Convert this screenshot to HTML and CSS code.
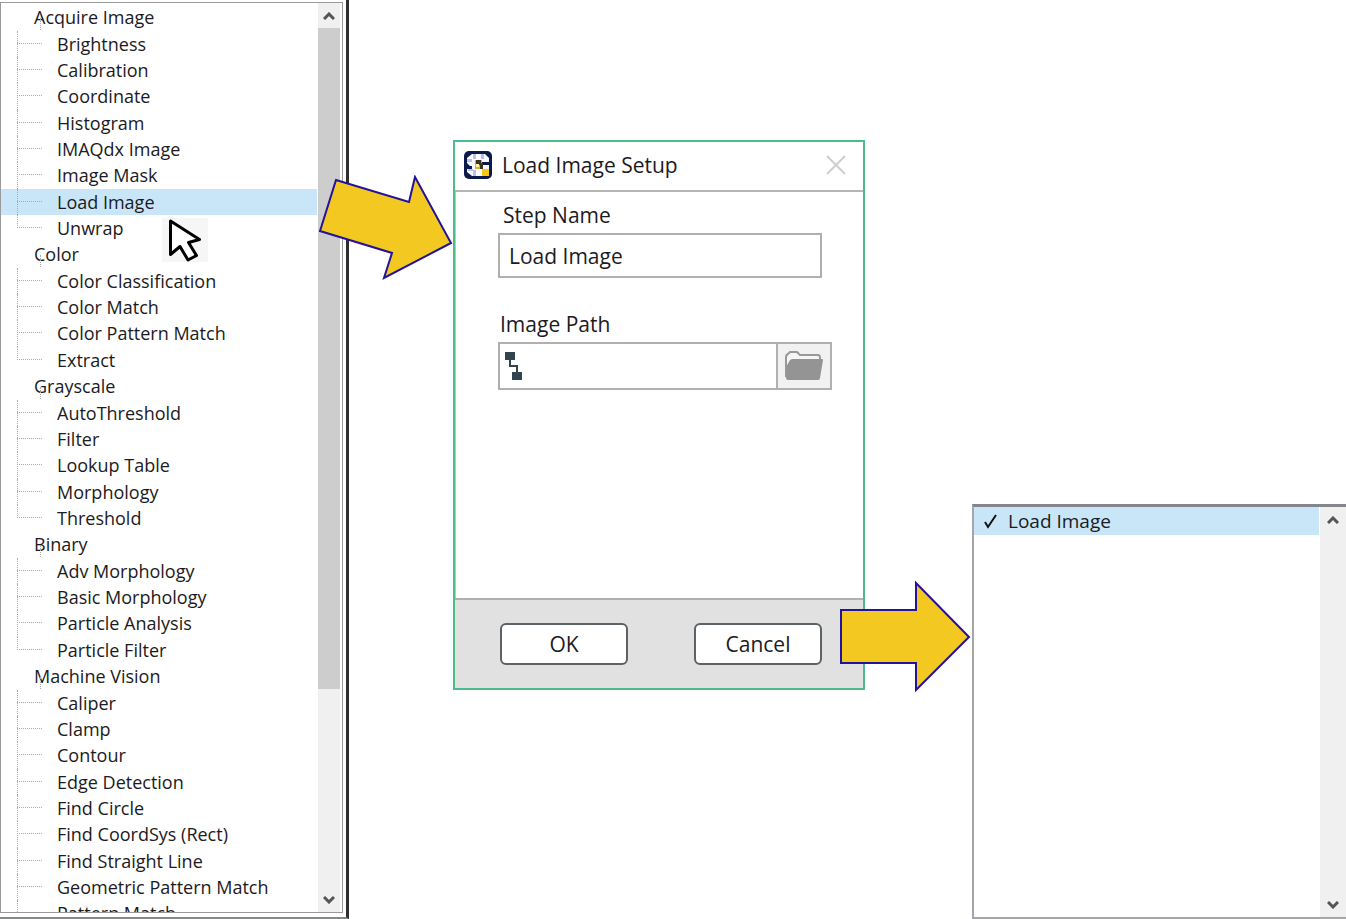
FILE: index.html
```html
<!DOCTYPE html>
<html lang="en">
<head>
<meta charset="utf-8">
<meta name="viewport" content="width=device-width, initial-scale=1">
<title>Load Image Setup</title>
<link rel="stylesheet" href="styles.css">
</head>
<body>
<main class="stage">
  <section class="palette" aria-label="Steps">
    <div class="palette-frame">
      <div class="tree">
        <section class="group">
          <h2 class="group-name">Acquire Image</h2>
          <ul class="steps">
            <li class="step">Brightness</li>
            <li class="step">Calibration</li>
            <li class="step">Coordinate</li>
            <li class="step">Histogram</li>
            <li class="step">IMAQdx Image</li>
            <li class="step">Image Mask</li>
            <li class="step step-selected">Load Image</li>
            <li class="step">Unwrap</li>
          </ul>
        </section>
        <section class="group">
          <h2 class="group-name">Color</h2>
          <ul class="steps">
            <li class="step">Color Classification</li>
            <li class="step">Color Match</li>
            <li class="step">Color Pattern Match</li>
            <li class="step">Extract</li>
          </ul>
        </section>
        <section class="group">
          <h2 class="group-name">Grayscale</h2>
          <ul class="steps">
            <li class="step">AutoThreshold</li>
            <li class="step">Filter</li>
            <li class="step">Lookup Table</li>
            <li class="step">Morphology</li>
            <li class="step">Threshold</li>
          </ul>
        </section>
        <section class="group">
          <h2 class="group-name">Binary</h2>
          <ul class="steps">
            <li class="step">Adv Morphology</li>
            <li class="step">Basic Morphology</li>
            <li class="step">Particle Analysis</li>
            <li class="step">Particle Filter</li>
          </ul>
        </section>
        <section class="group">
          <h2 class="group-name">Machine Vision</h2>
          <ul class="steps">
            <li class="step">Caliper</li>
            <li class="step">Clamp</li>
            <li class="step">Contour</li>
            <li class="step">Edge Detection</li>
            <li class="step">Find Circle</li>
            <li class="step">Find CoordSys (Rect)</li>
            <li class="step">Find Straight Line</li>
            <li class="step">Geometric Pattern Match</li>
            <li class="step">Pattern Match</li>
          </ul>
        </section>
      </div>
      <div class="scrollbar">
        <button class="scroll-button" type="button" aria-label="Scroll up"><svg width="12" height="8" viewBox="0 0 12 8"><path d="M1 7 6 2l5 5"/></svg></button>
        <div class="scroll-track"><div class="scroll-thumb"></div></div>
        <button class="scroll-button" type="button" aria-label="Scroll down"><svg width="12" height="8" viewBox="0 0 12 8"><path d="M1 1l5 5 5-5"/></svg></button>
      </div>
    </div>
  </section>

  <form class="dialog" role="dialog" aria-labelledby="dialog-title">
    <header class="dialog-header">
      <svg class="app-icon" width="30" height="30" viewBox="0 0 30 30" aria-hidden="true">
        <rect x="1" y="1" width="28" height="28" rx="5" fill="#0b1a4a"/>
        <path d="M9 4h13l4 4v4h-7v3h7v11H9l-5-4v-3h5v-3H7l-3-3V8z" fill="#fbfbff"/>
        <path d="M10 4h3v5h-3zM18 4h3v5h-3zM4 9h5v3H4zM10 20h3v6h-3zM5 19h5v2H5z" fill="#b9bdf0"/>
        <path d="M12 10h7v9h-7z" fill="#d9b52a"/>
        <path d="M13 10h5v3h2v6h-3v-4h-4z" fill="#3a3420"/>
        <path d="M13 14h3v3h-3z" fill="#fff3a8"/>
        <path d="M19 19h7v7h-7z" fill="#f5c916"/>
      </svg>
      <h1 class="dialog-title" id="dialog-title">Load Image Setup</h1>
      <button class="close" type="button" aria-label="Close"><svg width="20" height="20" viewBox="0 0 20 20"><path d="M1 1l18 18M19 1 1 19"/></svg></button>
    </header>
    <div class="dialog-body">
      <div class="field">
        <label class="label label-name" for="step-name">Step Name</label>
        <input class="name-input" id="step-name" type="text" value="Load Image">
      </div>
      <div class="field">
        <label class="label" for="image-path">Image Path</label>
        <div class="path-box">
          <svg class="path-icon" width="18" height="28" viewBox="0 0 18 28" aria-hidden="true">
            <path d="M0 0h10v8H0zM7 20h10v8H7z" fill="#33444f"/>
            <path d="M5 8v6h7v6" fill="none" stroke="#33444f" stroke-width="2"/>
          </svg>
          <input class="path-input" id="image-path" type="text">
          <button class="browse" type="button" aria-label="Browse">
            <svg width="40" height="30" viewBox="0 0 40 30">
              <path d="M2 26V6q0-2 2-3l2-2h7l3 3h18q2 0 2 3v4" fill="#f6f6f6" stroke="#999" stroke-width="2"/>
              <path d="M8 8h30q1 0 1 1l-3 18q0 2-2 2H4q-2 0-2-2V16l4-7z" fill="#949494"/>
            </svg>
          </button>
        </div>
      </div>
    </div>
    <footer class="dialog-footer">
      <button class="action" type="button">OK</button>
      <button class="action" type="button">Cancel</button>
    </footer>
  </form>

  <section class="script" aria-label="Added steps">
    <ul class="script-list">
      <li class="script-step">
        <svg class="check" width="14" height="16" viewBox="0 0 14 16" aria-hidden="true"><path d="M1 9l3 5L12 2"/></svg>
        <span>Load Image</span>
      </li>
    </ul>
    <div class="scrollbar scrollbar-wide">
      <button class="scroll-button" type="button" aria-label="Scroll up"><svg width="12" height="8" viewBox="0 0 12 8"><path d="M1 7 6 2l5 5"/></svg></button>
      <div class="scroll-track"></div>
      <button class="scroll-button" type="button" aria-label="Scroll down"><svg width="12" height="8" viewBox="0 0 12 8"><path d="M1 1l5 5 5-5"/></svg></button>
    </div>
  </section>

  <svg class="cursor" width="46" height="44" viewBox="0 0 46 44" aria-hidden="true">
    <path d="M8.500 3v33.500l9.500-8 8 13.500 8.500-4.500-8-13 11-3z"/>
  </svg>
  <svg class="arrow arrow-first" width="136" height="108" viewBox="0 0 136 108" aria-hidden="true">
    <path d="M18 5 91 27 97 2 133 68 66 103 74 78 2 56z"/>
  </svg>
  <svg class="arrow arrow-second" width="132" height="112" viewBox="0 0 132 112" aria-hidden="true">
    <path d="M2 30h75V3l53 54-53 53V83H2z"/>
  </svg>
</main>
</body>
</html>
```
FILE: styles.css
```css
* {
  box-sizing: border-box;
}

body {
  margin: 0;
  background: #fff;
  color: #1c1a22;
  font-family: "Open Sans", "Noto Sans", sans-serif;
  font-size: 19px;
}

h1, h2, ul {
  margin: 0;
  padding: 0;
  font-size: inherit;
  font-weight: 400;
  list-style: none;
}

button, input {
  margin: 0;
  padding: 0;
  border: 0;
  border-radius: 0;
  background: none;
  color: inherit;
  font: inherit;
}

svg {
  display: block;
}

.stage {
  position: relative;
  display: flex;
  align-items: flex-start;
  height: 100vh;
  overflow: hidden;
}

/* Step palette */
.palette {
  flex: none;
  width: 349px;
  height: 100%;
  padding: 2px 3px 4px 0;
  border-right: 3px solid #2e2e2e;
  border-bottom: 2px solid #85888b;
}

.palette-frame {
  display: flex;
  height: 100%;
  padding-right: 2px;
  border: 1px solid #9a9a9a;
}

.tree {
  flex: 1;
  padding-top: 1px;
  overflow: hidden;
  font-size: 18px;
  line-height: 26px;
}

.group-name {
  position: relative;
  padding: 0 0 1px 33px;
}

.group-name::after {
  content: "";
  position: absolute;
  left: 39px;
  top: 14px;
  bottom: 1px;
  border-left: 1px dotted #aaa;
}

.step {
  position: relative;
  margin-right: 1px;
  padding-left: 56px;
}

.step:nth-child(3n) {
  padding-bottom: 1px;
}

.step-selected {
  background: #c9e6f8;
}

.step::before,
.step::after {
  content: "";
  position: absolute;
  left: 16px;
}

.step::before {
  top: 0;
  bottom: 0;
  border-left: 1px dotted #aaa;
}

.step:last-child::before {
  bottom: 50%;
}

.step::after {
  top: 12px;
  width: 25px;
  border-top: 1px dotted #aaa;
}

/* Scroll bars */
.scrollbar {
  flex: none;
  display: flex;
  flex-direction: column;
  width: 22px;
  background: #f0f0f0;
}

.scrollbar-wide {
  width: 26px;
}

.scroll-button {
  display: grid;
  place-items: center;
  height: 25px;
}

.scroll-button path {
  fill: none;
  stroke: #555;
  stroke-width: 3;
}

.scroll-track {
  flex: 1;
}

.scroll-thumb {
  height: 77%;
  background: #cdcdcd;
}

/* Setup dialog */
.dialog {
  flex: none;
  display: flex;
  flex-direction: column;
  width: 412px;
  height: 550px;
  margin: 140px 0 0 104px;
  border: 2px solid #4dbb8d;
  font-size: 21px;
  line-height: 28px;
}

.dialog-header {
  display: flex;
  align-items: center;
  height: 50px;
  padding: 0 17px 2px 8px;
  border-bottom: 2px solid #b5b5b5;
}

.dialog-title {
  flex: 1;
  margin-left: 9px;
}

.close path {
  fill: none;
  stroke: #cfcfcf;
  stroke-width: 2;
}

.dialog-body {
  flex: 1;
  display: flex;
  flex-direction: column;
  gap: 32px;
  padding: 9px 31px 0 42px;
  border-left: 1px solid #b5ccc2;
}

.field {
  display: flex;
  flex-direction: column;
  gap: 4px;
}

.label {
  padding-left: 2px;
}

.label-name {
  padding-left: 5px;
}

.name-input {
  height: 45px;
  margin-right: 10px;
  padding: 0 9px;
  border: 2px solid #b0b0b0;
}

.path-box {
  display: flex;
  height: 48px;
  border: 2px solid #b0b0b0;
}

.path-icon {
  flex: none;
  align-self: center;
  margin: 0 5px;
}

.path-input {
  flex: 1;
  min-width: 0;
}

.browse {
  display: grid;
  place-items: center;
  width: 54px;
  border-left: 2px solid #b0b0b0;
  background: #f1f1f1;
}

.dialog-footer {
  display: flex;
  justify-content: space-between;
  align-items: center;
  height: 90px;
  padding: 0 41px 0 45px;
  border-top: 2px solid #b0b0b0;
  background: #e1e1e1;
}

.action {
  width: 128px;
  height: 42px;
  border: 2px solid #5d6266;
  border-radius: 6px;
  background: #fff;
}

/* Added steps */
.script {
  flex: 1;
  align-self: stretch;
  display: flex;
  margin: 504px 0 0 107px;
  border: solid #a5a5aa;
  border-width: 3px 0 2px 2px;
  border-top-color: #85858c;
}

.script-list {
  flex: 1;
}

.script-step {
  display: flex;
  align-items: center;
  gap: 10px;
  margin-right: 1px;
  padding-left: 10px;
  background: #c9e6f8;
  line-height: 28px;
}

.check path {
  fill: none;
  stroke: #111;
  stroke-width: 2;
}

/* Pointer and flow arrows */
.cursor,
.arrow {
  position: absolute;
}

.cursor {
  left: 162px;
  top: 218px;
  background: #f6f6f6;
}

.cursor path {
  fill: #fff;
  stroke: #000;
  stroke-width: 3;
  stroke-linejoin: round;
}

.arrow path {
  fill: #f3c921;
  stroke: #24129a;
  stroke-width: 2;
}

.arrow-first {
  left: 318px;
  top: 175px;
}

.arrow-second {
  left: 839px;
  top: 580px;
}
```
